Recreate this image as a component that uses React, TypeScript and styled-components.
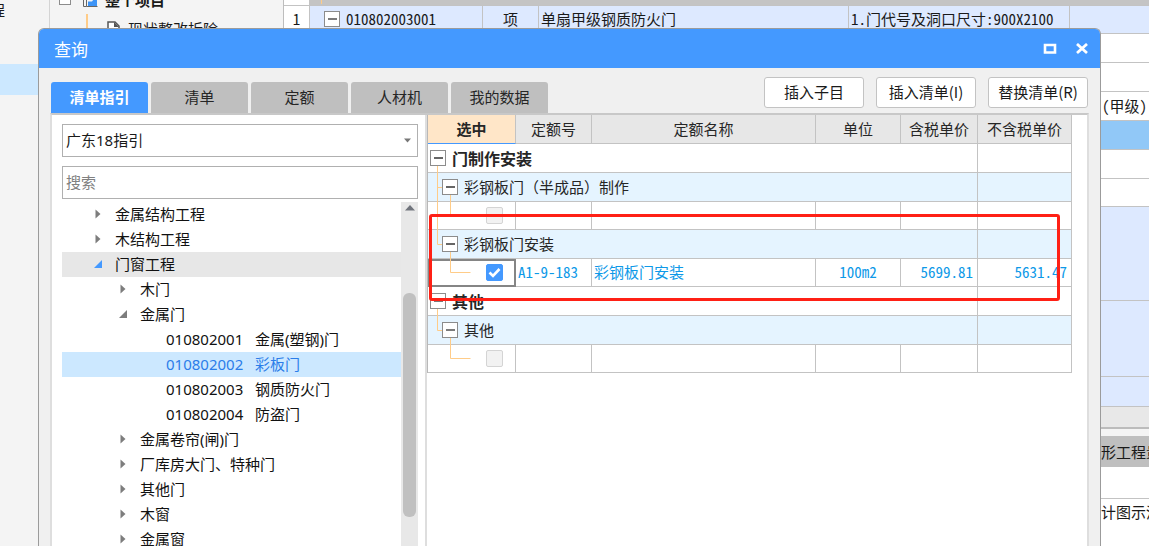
import React, { useState } from "react";
import styled, { createGlobalStyle } from "styled-components";

const GlobalStyle = createGlobalStyle`
  * { box-sizing: border-box; }
  html, body { margin: 0; height: 100%; overflow: hidden; }
  body {
    background: #f4f4f4;
    color: #1a1a1a;
    font: 15px/20px "Noto Sans", "Noto Sans CJK SC", sans-serif;
  }
  button, input, select { font: inherit; color: inherit; }
  table { border-collapse: separate; border-spacing: 0; table-layout: fixed; }
`;

const gridFont = `
  font-family: "Noto Sans CJK SC", sans-serif;
  font-feature-settings: "hwid";
`;

/* ---------- main window behind the dialog ---------- */

const Screen = styled.div`
  position: relative;
  display: flex;
  height: 100vh;
  overflow: hidden;
`;

const NavRail = styled.nav`
  flex: none;
  width: 50px;
  border-right: 1px solid #d4d4d4;
`;

const NavItem = styled.a<{ $active?: boolean }>`
  display: flex;
  justify-content: flex-end;
  width: ${(p) => (p.$active ? "auto" : "5px")};
  height: ${(p) => (p.$active ? "31px" : "24px")};
  margin-bottom: ${(p) => (p.$active ? "0" : "40px")};
  overflow: hidden;
  color: inherit;
  text-decoration: none;
  white-space: nowrap;
  background: ${(p) => (p.$active ? "#cce8ff" : "transparent")};
`;

const ProjectPane = styled.aside`
  flex: none;
  width: 233px;
  overflow: hidden;
`;

const ProjectRows = styled.div`
  margin-top: -15px;
`;

const ProjectRow = styled.div<{ $child?: boolean }>`
  display: flex;
  align-items: center;
  gap: ${(p) => (p.$child ? "8px" : "7px")};
  height: 29px;
  padding-left: ${(p) => (p.$child ? "36px" : "9px")};
  font-weight: ${(p) => (p.$child ? 400 : 700)};
  white-space: nowrap;

  svg { flex: none; }
`;

const Workspace = styled.main`
  display: flex;
  flex-direction: column;
  flex: 1;
  min-width: 0;
  ${gridFont}
`;

const BackTable = styled.table`
  flex: none;
  width: 100%;
  border-left: 1px solid #bdbdbd;
  background: #fff;

  td {
    padding: 0 2px 1px;
    border-right: 1px solid #c3c3c3;
    border-bottom: 1px solid #c3c3c3;
    white-space: nowrap;
    overflow: hidden;
  }
  td:last-child { border-right: 0; }
`;

const BackRow = styled.tr<{ $h: number; $bg?: string }>`
  height: ${(p) => p.$h}px;
  background: ${(p) => p.$bg || "#fff"};
`;

const BackCell = styled.td<{ $align?: string; $bg?: string }>`
  text-align: ${(p) => p.$align || "left"};
  background: ${(p) => p.$bg || "transparent"};
`;

const OutlineCell = styled.div`
  display: flex;
  align-items: center;
  gap: 6px;
  padding-left: 12px;
`;

const OutlineLine = styled.div`
  width: 10px;
  height: 4px;
  border-right: 1px solid #ffcc88;
`;

const Splitter = styled.div`
  flex: none;
  height: 22px;
  border-bottom: 2px solid #bcbcbc;
  background: #e8e8e8;
`;

const DetailTabs = styled.div`
  display: flex;
  align-items: center;
  justify-content: flex-end;
  flex: none;
  height: 31px;
  margin-top: 7px;
  background: #bfbfbf;
`;

const DetailBody = styled.div`
  flex: 1;
  padding-top: 31px;
  background: #fff;
`;

const DetailRow = styled.div`
  display: flex;
  justify-content: flex-end;
  padding-top: 3px;
  border-top: 1px solid #c3c3c3;
`;

const Clipped = styled.span`
  width: 48px;
  overflow: hidden;
  white-space: nowrap;
`;

/* ---------- dialog ---------- */

const Dialog = styled.section`
  position: absolute;
  top: 28px;
  right: 48px;
  bottom: 0;
  left: 38px;
  display: flex;
  flex-direction: column;
  border: 1px solid #9b9b9b;
  border-bottom: 0;
  border-radius: 6px 6px 0 0;
  background: #f0f0f0;
  overflow: hidden;
`;

const TitleBar = styled.header`
  display: flex;
  align-items: center;
  flex: none;
  height: 39px;
  padding: 0 10px 0 15px;
  color: #fff;
  background: #4499ff;
`;

const Title = styled.h1`
  flex: 1;
  margin: 0;
  padding-top: 2px;
  font-size: 17px;
  font-weight: 400;
  line-height: 20px;
`;

const WindowButton = styled.button`
  display: flex;
  align-items: center;
  justify-content: center;
  width: 16px;
  height: 20px;
  margin-left: 16px;
  padding: 0;
  border: 0;
  background: none;
`;

const Toolbar = styled.div`
  display: flex;
  justify-content: space-between;
  flex: none;
  height: 45px;
  padding: 0 12px;
`;

const Tabs = styled.div`
  display: flex;
  align-items: flex-end;
  gap: 3px;
`;

const Tab = styled.button<{ $active?: boolean }>`
  width: 97px;
  height: 31px;
  padding: 0 0 2px;
  border: 0;
  border-radius: 3px 3px 0 0;
  font-weight: ${(p) => (p.$active ? 700 : 400)};
  color: ${(p) => (p.$active ? "#fff" : "#262626")};
  background: ${(p) => (p.$active ? "#4499ff" : "#bfbfbf")};
`;

const Actions = styled.div`
  display: flex;
  gap: 12px;
  padding-top: 9px;
`;

const ActionButton = styled.button`
  width: 100px;
  height: 31px;
  padding: 0 0 1px;
  border: 1px solid #c3c3c3;
  border-radius: 3px;
  font-family: "Noto Sans CJK SC", sans-serif;
  background: #fff;
`;

const Panes = styled.div`
  display: flex;
  flex: 1;
  min-height: 0;
  margin: 0 11px;
  border: solid #dedede;
  border-width: 2px 2px 0;
  border-top-color: #c8c8c8;
  background: #fff;
`;

const GuidePane = styled.div`
  display: flex;
  flex-direction: column;
  flex: none;
  width: 375px;
  padding: 9px 7px 0 10px;
  border-right: 2px solid #dedede;
`;

const SelectBox = styled.div`
  display: grid;
  align-items: center;
  margin-bottom: 9px;

  > * { grid-area: 1 / 1; }
  svg { justify-self: end; margin-right: 7px; pointer-events: none; }
`;

const fieldStyle = `
  width: 100%;
  height: 33px;
  padding: 0 3px 2px;
  border: 1px solid #b0b0b0;
  border-radius: 0;
  background: #fff;
  outline: none;
`;

const GuideSelect = styled.select`
  ${fieldStyle}
  appearance: none;
`;

const SearchInput = styled.input`
  ${fieldStyle}
  flex: none;
  margin-bottom: 3px;
  &::placeholder { color: #808080; opacity: 1; }
`;

const TreeArea = styled.div`
  display: flex;
  flex: 1;
  min-height: 0;
`;

const TreeList = styled.ul`
  flex: 1;
  margin: 0;
  padding: 0;
  list-style: none;
  overflow: hidden;
`;

const TreeItem = styled.li<{ $level: number; $state?: string }>`
  display: flex;
  align-items: center;
  height: 25px;
  padding: 0 0 1px ${(p) => p.$level * 25 + 4}px;
  white-space: nowrap;
  color: ${(p) => (p.$state === "selected" ? "#2b7de9" : "#111")};
  background: ${(p) =>
    p.$state === "selected" ? "#cce8ff" : p.$state === "open" ? "#e7e7e7" : "transparent"};
`;

const TreeToggle = styled.button`
  display: flex;
  align-items: center;
  width: 24px;
  height: 20px;
  padding: 0 0 0 3px;
  border: 0;
  background: none;
`;

const ItemCode = styled.span`
  width: 89px;
`;

const Scrollbar = styled.div`
  display: flex;
  flex-direction: column;
  align-items: center;
  flex: none;
  width: 17px;
  padding-top: 3px;
  background: #e8e8e8;
`;

const ScrollThumb = styled.div`
  width: 13px;
  height: 224px;
  margin-top: 82px;
  border-radius: 6px;
  background: #c0c0c0;
`;

const QuotaPane = styled.div`
  position: relative;
  flex: 1;
  min-width: 0;
  padding-right: 15px;
  color: #262626;
  ${gridFont}
`;

const QuotaTable = styled.table`
  width: 100%;
  border-left: 1px solid #b8b8b8;

  th, td {
    padding: 0 2px 1px;
    border-right: 1px solid #c3c3c3;
    border-bottom: 1px solid #c3c3c3;
    white-space: nowrap;
  }
`;

const HeadCell = styled.th<{ $current?: boolean }>`
  height: 29px;
  font-weight: ${(p) => (p.$current ? 700 : 400)};
  background: ${(p) => (p.$current ? "#ffe6c8" : "#e7e7e7")};
  && { border-bottom-color: ${(p) => (p.$current ? "#4499ff" : "#c3c3c3")}; }
`;

const GroupRow = styled.tr<{ $sub?: boolean }>`
  height: 29px;
  font-size: ${(p) => (p.$sub ? "15px" : "16px")};
  font-weight: ${(p) => (p.$sub ? 400 : 700)};
  font-feature-settings: normal;
  background: ${(p) => (p.$sub ? "#e5f4ff" : "#fff")};
`;

const LeafRow = styled.tr`
  height: 28px;
  color: #0d99e8;
`;

const LineCell = styled.td`
  position: relative;
`;

const GroupLabel = styled.div<{ $sub?: boolean }>`
  position: relative;
  display: flex;
  align-items: center;
  gap: 6px;
  padding-left: ${(p) => (p.$sub ? "12px" : "0")};
`;

const Connector = styled.svg`
  position: absolute;
  top: 0;
  left: 0;
`;

const Expander = styled.button`
  display: flex;
  flex: none;
  width: 16px;
  height: 16px;
  padding: 0;
  border: 0;
  background: none;
`;

const CheckCell = styled.td<{ $focus?: boolean }>`
  position: relative;
  box-shadow: ${(p) => (p.$focus ? "inset 2px 2px #858585, inset -1px -1px #858585" : "none")};
  && { border-color: ${(p) => (p.$focus ? "#858585" : "#c3c3c3")}; }
`;

const CheckBox = styled.input`
  display: block;
  appearance: none;
  width: 17px;
  height: 17px;
  margin: 0 0 0 56px;
  border: 1px solid #d4d4d4;
  border-radius: 2px;
  background: #f2f2f2;

  &:checked { border-color: #4499ff; background: #4499ff; }
`;

const CheckMark = styled.svg`
  position: absolute;
  top: 5px;
  left: 58px;
  pointer-events: none;
`;

const Cell = styled.td<{ $align?: string }>`
  text-align: ${(p) => p.$align || "left"};
  && { padding-right: ${(p) => (p.$align === "right" ? "4px" : "2px")}; }
`;

const Highlight = styled.div`
  position: absolute;
  top: 99px;
  right: 27px;
  left: 2px;
  height: 87px;
  border: 3px solid #ff2015;
  border-radius: 3px;
  pointer-events: none;
`;

/* ---------- small drawings ---------- */

const MinusBox = () => (
  <svg width="16" height="16" viewBox="0 0 16 16">
    <rect x="0.5" y="0.5" width="15" height="15" fill="#fff" stroke="#8c8c8c" />
    <path d="M4 8h9" stroke="#333" strokeWidth="1.3" />
  </svg>
);

const Toggle = ({ open, accent }: { open?: boolean; accent?: boolean }) => (
  <svg width="10" height="10" viewBox="0 0 10 10">
    {open ? (
      <path d="M8 1v8H0z" fill={accent ? "#4499ff" : "#7d7d7d"} />
    ) : (
      <path d="M1.500 0.500l5 4.500l-5 4.500z" fill="#7d7d7d" />
    )}
  </svg>
);

const GroupCell = ({ label, sub, path }: { label: string; sub?: boolean; path: string }) => (
  <LineCell colSpan={5}>
    <Connector width="40" height="29" fill="none" stroke="#ffcc88">
      <path d={path} />
    </Connector>
    <GroupLabel $sub={sub}>
      <Expander aria-label={`折叠${label}`}>
        <MinusBox />
      </Expander>
      {label}
    </GroupLabel>
  </LineCell>
);

/* ---------- data ---------- */

type Node = { level: number; name: string; code?: string; open?: boolean; state?: string };

const nodes: Node[] = [
  { level: 1, name: "金属结构工程" },
  { level: 1, name: "木结构工程" },
  { level: 1, name: "门窗工程", open: true, state: "open" },
  { level: 2, name: "木门" },
  { level: 2, name: "金属门", open: true },
  { level: 4, name: "金属(塑钢)门", code: "010802001" },
  { level: 4, name: "彩板门", code: "010802002", state: "selected" },
  { level: 4, name: "钢质防火门", code: "010802003" },
  { level: 4, name: "防盗门", code: "010802004" },
  { level: 2, name: "金属卷帘(闸)门" },
  { level: 2, name: "厂库房大门、特种门" },
  { level: 2, name: "其他门" },
  { level: 2, name: "木窗" },
  { level: 2, name: "金属窗" },
];

type Quota = { code: string; name: string; unit: string; taxed: string; untaxed: string };

const QuotaRow = ({ quota, path }: { quota?: Quota; path: string }) => {
  const [checked, setChecked] = useState(Boolean(quota));
  return (
    <LeafRow>
      <CheckCell $focus={Boolean(quota)}>
        <Connector width="50" height="28" fill="none" stroke="#ffcc88">
          <path d={path} />
        </Connector>
        <CheckBox
          type="checkbox"
          aria-label={quota ? quota.name : "选中"}
          checked={checked}
          disabled={!quota}
          onChange={(e) => setChecked(e.target.checked)}
        />
        {checked && (
          <CheckMark width="17" height="17" viewBox="0 0 17 17" fill="none">
            <path d="M3.5 8.5l3.5 3.5l6.5-7" stroke="#fff" strokeWidth="2.6" />
          </CheckMark>
        )}
      </CheckCell>
      <Cell>{quota?.code}</Cell>
      <Cell>{quota?.name}</Cell>
      <Cell $align="center">{quota?.unit}</Cell>
      <Cell $align="right">{quota?.taxed}</Cell>
      <Cell $align="right">{quota?.untaxed}</Cell>
    </LeafRow>
  );
};

const tabNames = ["清单指引", "清单", "定额", "人材机", "我的数据"];

export default function App() {
  const [tab, setTab] = useState(0);
  return (
    <Screen>
      <GlobalStyle />
      <NavRail>
        <NavItem href="#project">工程</NavItem>
        <NavItem href="#current" $active aria-label="当前工程" />
      </NavRail>

      <ProjectPane>
        <ProjectRows>
          <ProjectRow>
            <svg width="12" height="12" viewBox="0 0 12 12">
              <rect x="0.5" y="0.5" width="11" height="10" fill="#fff" stroke="#8c8c8c" />
            </svg>
            <svg width="20" height="16" viewBox="0 0 20 16" fill="none">
              <path d="M5.500 0v14.500h3V0M8.500 14.500h11" stroke="#666" />
              <path d="M10 14V9.500h4l1.500-2H19V14z" fill="#3d94f6" />
            </svg>
            整个项目
          </ProjectRow>
          <ProjectRow $child>
            <svg width="34" height="29" viewBox="0 0 34 29" fill="none">
              <path d="M1 0v29" stroke="#ffcc88" strokeWidth="2" />
              <path d="M22 22V8h7l4 4v10z" fill="#fff" stroke="#555" strokeWidth="1.500" />
              <path d="M28 8v5h5z" fill="#555" />
            </svg>
            现状整改拆除
          </ProjectRow>
        </ProjectRows>
      </ProjectPane>

      <Workspace>
        <BackTable>
          <colgroup>
            <col style={{ width: 26 }} />
            <col style={{ width: 173 }} />
            <col style={{ width: 56 }} />
            <col style={{ width: 310 }} />
            <col style={{ width: 221 }} />
            <col />
          </colgroup>
          <tbody>
            <BackRow $h={5} $bg="#c4c4c4">
              <BackCell $bg="#fff" />
              <BackCell colSpan={5}>
                <OutlineLine />
              </BackCell>
            </BackRow>
            <BackRow $h={28} $bg="#dde9ff">
              <BackCell $align="center" $bg="#fff">1</BackCell>
              <BackCell>
                <OutlineCell>
                  <Expander aria-label="折叠">
                    <MinusBox />
                  </Expander>
                  010802003001
                </OutlineCell>
              </BackCell>
              <BackCell $align="center">项</BackCell>
              <BackCell>单扇甲级钢质防火门</BackCell>
              <BackCell>1.门代号及洞口尺寸:900X2100</BackCell>
              <BackCell />
            </BackRow>
            <BackRow $h={29}><BackCell colSpan={6} /></BackRow>
            <BackRow $h={29}><BackCell colSpan={6} /></BackRow>
            <BackRow $h={29}><BackCell colSpan={6} $align="right">(甲级)</BackCell></BackRow>
            <BackRow $h={29} $bg="#91c8f7"><BackCell colSpan={6} /></BackRow>
            <BackRow $h={29}><BackCell colSpan={6} /></BackRow>
            <BackRow $h={28}><BackCell colSpan={6} /></BackRow>
            <BackRow $h={94} $bg="#dde9ff"><BackCell colSpan={6} /></BackRow>
            <BackRow $h={76} $bg="#dde9ff"><BackCell colSpan={6} /></BackRow>
            <BackRow $h={30} $bg="#dde9ff"><BackCell colSpan={6} /></BackRow>
          </tbody>
        </BackTable>
        <Splitter />
        <DetailTabs>
          <Clipped>形工程量</Clipped>
        </DetailTabs>
        <DetailBody>
          <DetailRow>
            <Clipped>计图示洞口</Clipped>
          </DetailRow>
        </DetailBody>
      </Workspace>

      <Dialog role="dialog" aria-label="查询">
        <TitleBar>
          <Title>查询</Title>
          <WindowButton aria-label="最大化">
            <svg width="14" height="12" viewBox="0 0 14 12">
              <path d="M2 2h10v7.500H2z" fill="none" stroke="#fff" strokeWidth="2.600" />
            </svg>
          </WindowButton>
          <WindowButton aria-label="关闭">
            <svg width="14" height="12" viewBox="0 0 14 12">
              <path d="M2 1l10 9M12 1L2 10" stroke="#fff" strokeWidth="2.800" />
            </svg>
          </WindowButton>
        </TitleBar>

        <Toolbar>
          <Tabs role="tablist">
            {tabNames.map((name, i) => (
              <Tab key={name} role="tab" aria-selected={tab === i} $active={tab === i} onClick={() => setTab(i)}>
                {name}
              </Tab>
            ))}
          </Tabs>
          <Actions>
            <ActionButton>插入子目</ActionButton>
            <ActionButton>插入清单(I)</ActionButton>
            <ActionButton>替换清单(R)</ActionButton>
          </Actions>
        </Toolbar>

        <Panes>
          <GuidePane>
            <SelectBox>
              <GuideSelect aria-label="清单指引">
                <option>广东18指引</option>
              </GuideSelect>
              <svg width="7" height="5" viewBox="0 0 7 5">
                <path d="M0 0.500h7L3.500 4.500z" fill="#777" />
              </svg>
            </SelectBox>
            <SearchInput type="text" placeholder="搜索" aria-label="搜索" />
            <TreeArea>
              <TreeList role="tree">
                {nodes.map((n) => (
                  <TreeItem key={n.name} role="treeitem" $level={n.level} $state={n.state}>
                    {n.code ? (
                      <ItemCode>{n.code}</ItemCode>
                    ) : (
                      <TreeToggle aria-label={n.open ? "折叠" : "展开"}>
                        <Toggle open={n.open} accent={n.state === "open"} />
                      </TreeToggle>
                    )}
                    {n.name}
                  </TreeItem>
                ))}
              </TreeList>
              <Scrollbar>
                <svg width="10" height="6" viewBox="0 0 10 6">
                  <path d="M0 5.500L5 0l5 5.500z" fill="#70747c" />
                </svg>
                <ScrollThumb />
              </Scrollbar>
            </TreeArea>
          </GuidePane>

          <QuotaPane>
            <QuotaTable>
              <colgroup>
                <col style={{ width: 88 }} />
                <col style={{ width: 76 }} />
                <col />
                <col style={{ width: 85 }} />
                <col style={{ width: 77 }} />
                <col style={{ width: 94 }} />
              </colgroup>
              <thead>
                <tr>
                  <HeadCell $current>选中</HeadCell>
                  <HeadCell>定额号</HeadCell>
                  <HeadCell>定额名称</HeadCell>
                  <HeadCell>单位</HeadCell>
                  <HeadCell>含税单价</HeadCell>
                  <HeadCell>不含税单价</HeadCell>
                </tr>
              </thead>
              <tbody>
                <GroupRow>
                  <GroupCell label="门制作安装" path="M9.500 21v8" />
                  <td />
                </GroupRow>
                <GroupRow $sub>
                  <GroupCell sub label="彩钢板门（半成品）制作" path="M9.500 0v29M9.500 14.500h5M22.500 21v8" />
                  <td />
                </GroupRow>
                <QuotaRow path="M9.500 0v28M22.500 0v13.500h20" />
                <GroupRow $sub>
                  <GroupCell sub label="彩钢板门安装" path="M9.500 0v14.500h5M22.500 21v8" />
                  <td />
                </GroupRow>
                <QuotaRow
                  quota={{ code: "A1-9-183", name: "彩钢板门安装", unit: "100m2", taxed: "5699.81", untaxed: "5631.47" }}
                  path="M22.500 0v13.500h20"
                />
                <GroupRow>
                  <GroupCell label="其他" path="M9.500 21v8" />
                  <td />
                </GroupRow>
                <GroupRow $sub>
                  <GroupCell sub label="其他" path="M9.500 0v14.500h5M22.500 21v8" />
                  <td />
                </GroupRow>
                <QuotaRow path="M22.500 0v13.500h20" />
              </tbody>
            </QuotaTable>
            <Highlight />
          </QuotaPane>
        </Panes>
      </Dialog>
    </Screen>
  );
}
